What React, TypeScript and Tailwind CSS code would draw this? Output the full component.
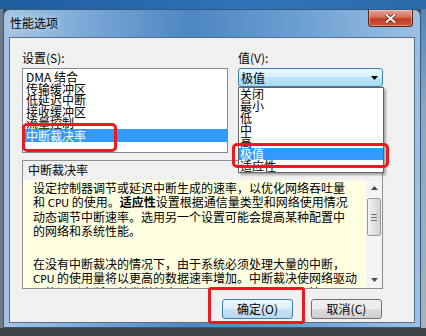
const settings = ['DMA 结合', '传输缓冲区', '低延迟中断', '接收缓冲区', '流量控制']
const values = ['关闭', '最小', '低', '中', '高']

function CloseButton() {
  return (
    <div className="flex h-[17px] w-[45px] items-center justify-center rounded-b-[4px] border border-t-0 border-[#5e1f14] bg-[linear-gradient(to_bottom,#e6a597,#d5705d_45%,#c23d27_55%,#c9543c)] shadow-[inset_0_0_0_1px_rgba(255,255,255,0.35)]">
      <svg width="11" height="9" viewBox="0 0 11 9">
        <path d="M1.5 1 L9.5 8 M9.5 1 L1.5 8" stroke="#5a2018" strokeWidth="3.6" strokeLinecap="round" />
        <path d="M1.5 1 L9.5 8 M9.5 1 L1.5 8" stroke="#ffffff" strokeWidth="2" strokeLinecap="round" />
      </svg>
    </div>
  )
}

function ScrollArrow({ up }: { up?: boolean }) {
  return (
    <div className="flex h-[16px] items-center justify-center">
      <svg width="7" height="4" viewBox="0 0 7 4">
        <path d={up ? 'M0 4 L3.5 0 L7 4 Z' : 'M0 0 L3.5 4 L7 0 Z'} fill="#4a4a4a" />
      </svg>
    </div>
  )
}

function Scrollbar() {
  return (
    <div className="flex w-[16px] flex-col bg-[#f4f4f4]">
      <ScrollArrow up />
      <div className="mx-[1px] mt-[2px] flex h-[38px] flex-col items-center justify-center gap-[2px] rounded-[2px] border border-[#9a9a9a] bg-[linear-gradient(to_right,#f3f3f3,#e2e2e2_50%,#d4d4d4)]">
        <div className="h-px w-[6px] bg-[#6f6f6f]" />
        <div className="h-px w-[6px] bg-[#6f6f6f]" />
        <div className="h-px w-[6px] bg-[#6f6f6f]" />
      </div>
      <div className="flex-1" />
      <ScrollArrow />
    </div>
  )
}

function Description() {
  const cpu = "font-['DejaVu_Sans',sans-serif] text-[10.5px]"
  return (
    <div className="flex h-[129px] w-[361px] flex-col border border-[#8e8f8f]">
      <div className="h-[19px] pl-[5px] pt-[2px] leading-[14px]">中断裁决率</div>
      <div className="flex h-[108px]">
        <div className="w-[344px] overflow-hidden bg-[#ffffe1] pl-[10px] pt-[1px] leading-[14px] whitespace-nowrap">
          <div>设定控制器调节或延迟中断生成的速率，以优化网络吞吐量</div>
          <div>
            和 <span className={cpu}>CPU</span> 的使用。<b>适应性</b>设置根据通信量类型和网络使用情况
          </div>
          <div>动态调节中断速率。选用另一个设置可能会提高某种配置中</div>
          <div>的网络和系统性能。</div>
          <div className="h-[19px]" />
          <div>在没有中断裁决的情况下，由于系统必须处理大量的中断，</div>
          <div>
            <span className={cpu}>CPU</span> 的使用量将以更高的数据速率增加。中断裁决使网络驱动
          </div>
          <div>器能识别中断，并发送单个（而不是多个）中断，直接</div>
        </div>
        <Scrollbar />
      </div>
    </div>
  )
}

function Client() {
  return (
    <div className="relative mx-[5px] flex h-[286px] flex-col border border-[#566f8c] bg-[#f0f0f0] pl-[12px] pt-[13px]">
      <div className="flex h-[14px] leading-[14px]">
        <div className="w-[206px]">设置(S):</div>
        <div className="ml-[10px]">值(V):</div>
      </div>
      <div className="mt-[3px] flex items-start">
        <div className="h-[85px] w-[206px] border border-[#828790] bg-white pt-[2px]">
          {settings.map((s) => (
            <div key={s} className="h-[11.5px] px-[3px] leading-[11.5px]">
              {s}
            </div>
          ))}
          <div className="h-[13px] bg-[#3399ff] px-[3px] leading-[13px] text-white">中断裁决率</div>
        </div>
        <div className="ml-[10px] flex h-[19px] w-[145px] items-center justify-between rounded-[3px] border border-[#3c7fb1] bg-[linear-gradient(to_bottom,#eaf6fd,#d9f0fc_45%,#bee6fd_50%,#a7d9f5)] pl-[2px] pr-[4px]">
          <span className="leading-[14px]">极值</span>
          <svg width="7" height="4" viewBox="0 0 7 4">
            <path d="M0 0 L3.5 4 L7 0 Z" fill="#000" />
          </svg>
        </div>
      </div>
      <div className="mt-[7px]">
        <Description />
      </div>
      <div className="mt-[10px] flex gap-[18px] pl-[200px]">
        <div className="flex h-[20px] w-[71px] items-center justify-center rounded-[3px] border border-[#3c7fb1] bg-[linear-gradient(to_bottom,#eef7fd,#dcedfa_50%,#c6e2f6_50%,#b9daf2)] leading-[14px]">
          确定(O)
        </div>
        <div className="flex h-[20px] w-[71px] items-center justify-center rounded-[3px] border border-[#707070] bg-[linear-gradient(to_bottom,#f2f2f2,#ebebeb_50%,#dddddd_50%,#cfcfcf)] leading-[14px]">
          取消(C)
        </div>
      </div>

      <div className="absolute left-[228px] top-[49px] h-[86px] w-[146px] border border-[#646464] bg-white shadow-[2px_2px_2px_rgba(0,0,0,0.3)]">
        {values.map((v) => (
          <div key={v} className="h-[12px] px-[1px] leading-[12px]">
            {v}
          </div>
        ))}
        <div className="h-[12px] bg-[#3399ff] px-[1px] leading-[12px] text-white">极值</div>
        <div className="h-[12px] px-[1px] leading-[12px]">适应性</div>
      </div>

      <div className="absolute left-[12px] top-[85px] h-[29px] w-[95px] rounded-[5px] border-[3px] border-[#ea1a1f]" />
      <div className="absolute left-[222px] top-[105px] h-[25px] w-[157px] rounded-[5px] border-[3px] border-[#ea1a1f]" />
      <div className="absolute left-[198px] top-[249px] h-[37px] w-[97px] rounded-[3px] border-[3px] border-[#ea1a1f]" />
    </div>
  )
}

function Window() {
  return (
    <div className="flex w-[418px] flex-col rounded-t-[7px] border border-[#34577d] bg-[linear-gradient(to_right,#a6c5e4,#7aa8d6_20%,#4c86c2_45%,#6a9fd2_70%,#9cc0e3)]">
      <div className="flex h-[27px] items-start justify-between pr-[7px]">
        <div className="ml-[6px] mt-[7px] leading-[12px] [text-shadow:0_0_6px_#e6f0fa]">性能选项</div>
        <CloseButton />
      </div>
      <Client />
      <div className="flex-1" />
    </div>
  )
}

export default function App() {
  return (
    <div className="flex h-[336px] w-[426px] flex-col overflow-hidden bg-[#44474b] font-['Noto_Sans_CJK_SC',sans-serif] text-[12px] text-black">
      <div className="h-[9px] shrink-0 bg-[linear-gradient(to_right,#1d5d9e,#2f74b8_60%,#2a6aa8)]" />
      <div className="flex h-[319px] shrink-0">
        <div className="w-[3px] bg-[#6f7c89]" />
        <Window />
        <div className="flex-1 bg-[linear-gradient(to_bottom,#4f86bd,#8ea5ba_30%,#a7b2bb)]" />
      </div>
      <div className="flex-1 bg-[#3f4246]" />
    </div>
  )
}
